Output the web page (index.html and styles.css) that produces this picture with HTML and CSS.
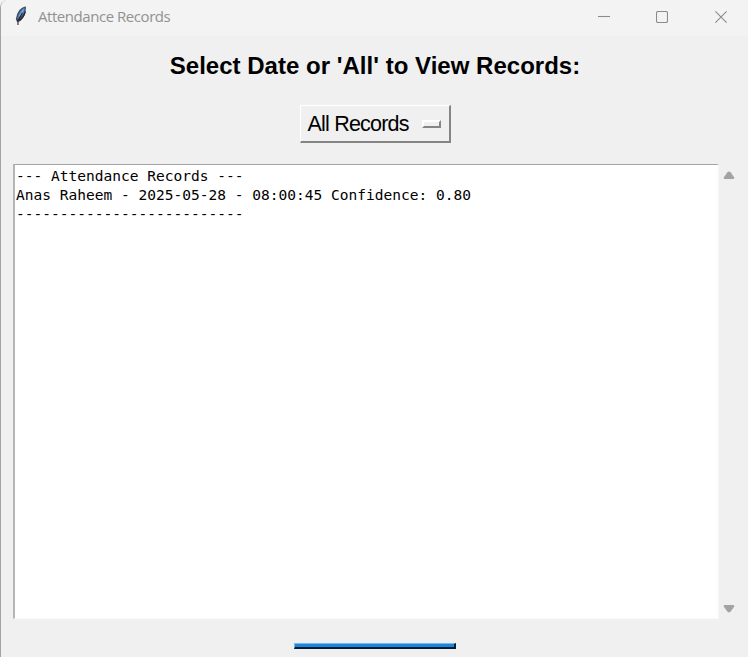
FILE: index.html
```html
<!DOCTYPE html>
<html lang="en">
<head>
<meta charset="utf-8">
<title>Attendance Records</title>
<link rel="stylesheet" href="styles.css">
</head>
<body>
<div class="window">
  <header class="titlebar">
    <svg class="feather" width="14" height="20" viewBox="0 0 14 20">
      <path d="M12 .5C8 .8 4.500 4 3 8.500L1.800 13l1.200 3 2.500-.5c3.500-2.500 6.500-8 6.500-15z" fill="#4a5058"/>
      <path d="M10.800 1.800C7.500 3 4.500 7 3.400 13 7.500 11.500 10.500 7 10.800 1.800z" fill="#4284ce"/>
      <path d="M9.500 3.500L5.500 10" stroke="#80b2e6" stroke-width="1.200"/>
      <path d="M11.500 5.500Q9.500 12 5.500 14.500M8.300 7L4.500 14M4 13.500v5.500" stroke="#202428" stroke-width="1.100" fill="none"/>
    </svg>
    <span class="caption">Attendance Records</span>
    <div class="controls">
      <svg width="12" height="12" viewBox="0 0 12 12"><path d="M0 5.500h12"/></svg>
      <svg width="12" height="12" viewBox="0 0 12 12"><rect x=".5" y=".5" width="11" height="11" rx="1.500"/></svg>
      <svg width="12" height="12" viewBox="0 0 12 12"><path d="M.4.4l11.200 11.200M11.600.4L.4 11.600"/></svg>
    </div>
  </header>
  <h1 class="heading">Select Date or 'All' to View Records:</h1>
  <button class="option-menu"><span class="option-label">All Records</span><span class="indicator"></span></button>
  <div class="viewer">
    <pre class="records">--- Attendance Records ---
Anas Raheem - 2025-05-28 - 08:00:45 Confidence: 0.80
--------------------------</pre>
    <div class="scrollbar">
      <svg width="12" height="9" viewBox="0 0 12 9"><path d="M4.500 1.200Q6-.4 7.500 1.200L11 6q1 2-1 2H2Q0 8 1 6z"/></svg>
      <svg width="12" height="9" viewBox="0 0 12 9"><path d="M4.500 7.800Q6 9.400 7.500 7.800L11 3q1-2-1-2H2Q0 1 1 3z"/></svg>
    </div>
  </div>
  <div class="action"></div>
</div>
</body>
</html>
```
FILE: styles.css
```css
* { box-sizing: border-box; }
body { margin: 0; background: #f3f3f3; overflow: hidden; }
.window {
  display: flex;
  flex-direction: column;
  align-items: center;
  width: 748px;
  height: 657px;
  border-left: 1px solid #a3a3a3;
  border-top-left-radius: 8px;
  background: #f0f0f0;
  font-family: "Liberation Sans", Arial, sans-serif;
  color: #000;
}
.titlebar {
  display: flex;
  align-items: center;
  width: 100%;
  height: 36px;
  padding: 0 21px 3px 13px;
  background: #f3f3f3;
  border-top-left-radius: 7px;
}
.feather { margin-top: -1px; }
.caption {
  margin: -2px 0 0 10px;
  font: 15px/20px "Open Sans", "Noto Sans", sans-serif;
  letter-spacing: -0.45px;
  color: #919191;
}
.controls { display: flex; gap: 47px; margin-left: auto; }
.controls svg { fill: none; stroke: #8b8b8b; stroke-width: 1.1; }
.controls svg:first-child { margin-right: -1px; }
.heading {
  margin: 16px 0 0;
  padding-left: 1px;
  font-size: 24px;
  line-height: 28px;
  letter-spacing: 0.02px;
  white-space: nowrap;
}
.option-menu {
  display: flex;
  align-items: center;
  justify-content: space-between;
  width: 151px;
  height: 38px;
  margin: 25px 0 0 1px;
  padding: 0 8px 0 7px;
  border: solid;
  border-width: 1px 2px 2px 1px;
  border-color: #fff #858585 #858585 #fff;
  background: #f0f0f0;
  font: 21.5px/24px "Liberation Sans", Arial, sans-serif;
  letter-spacing: -0.8px;
  color: #000;
}
.option-label { white-space: nowrap; }
.indicator {
  width: 19px;
  height: 8px;
  border: 2px solid;
  border-color: #fff #858585 #858585 #fff;
}
.viewer {
  display: flex;
  width: 100%;
  height: 455px;
  margin-top: 21px;
  padding-left: 12px;
}
.records {
  width: 706px;
  margin: 0;
  padding: 2px 0 0 1px;
  border: solid;
  border-width: 1px 2px 1px 2px;
  border-color: #a5a5a5 #fafafa #fafafa #b5b5b5;
  background: #fff;
  font: 14.54px/19px "DejaVu Sans Mono", monospace;
}
.scrollbar {
  display: flex;
  flex-direction: column;
  justify-content: space-between;
  padding: 7px 0 6px 4px;
}
.scrollbar svg { fill: #a3a3a3; }
.action {
  width: 162px;
  height: 6px;
  margin-top: 24px;
  border: solid;
  border-width: 1px 2px 2px 1px;
  border-color: #70baf5 #071c2d #071c2d #70baf5;
  background: #1a86dd;
}
```
